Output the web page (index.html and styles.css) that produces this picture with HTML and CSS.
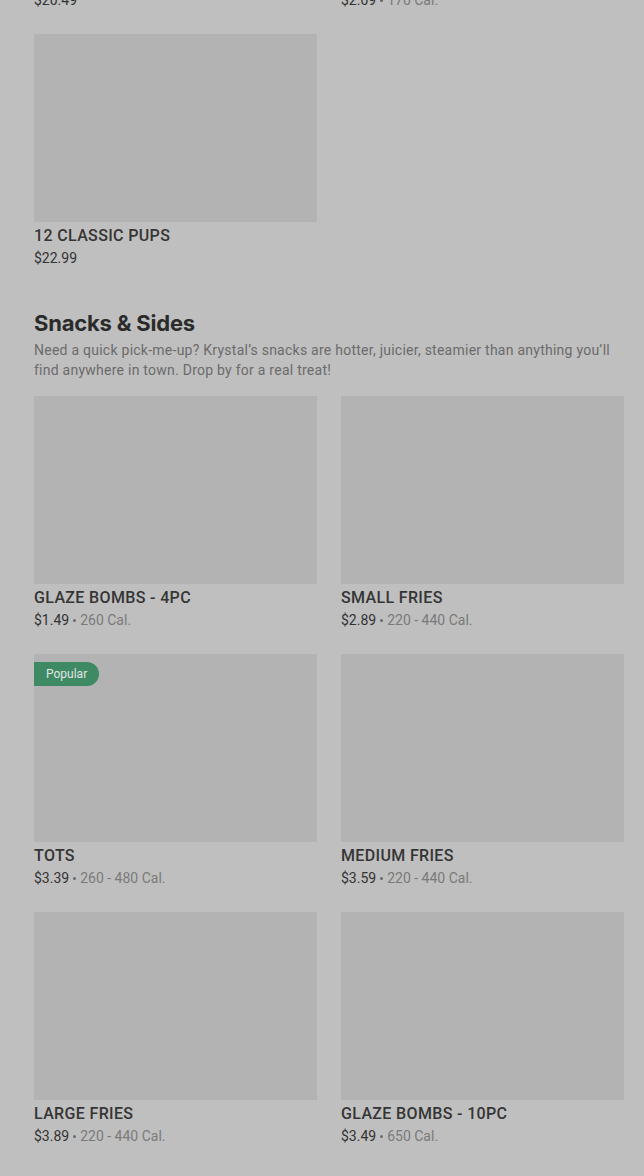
FILE: index.html
```html
<!DOCTYPE html>
<html lang="en">
<head>
<meta charset="utf-8">
<link rel="stylesheet" href="styles.css">
</head>
<body>
<main class="page">
  <section class="section section-top">
    <div class="grid">
      <div class="card card-partial">
        <div class="card-price"><span class="price">$20.49</span></div>
      </div>
      <div class="card card-partial">
        <div class="card-price"><span class="price">$2.09</span><span class="dot"></span><span class="cal">170 Cal.</span></div>
      </div>
      <div class="card">
        <div class="thumb"></div>
        <div class="card-name">12 CLASSIC PUPS</div>
        <div class="card-price"><span class="price">$22.99</span></div>
      </div>
    </div>
  </section>

  <section class="section">
    <h2 class="section-title">Snacks &amp; Sides</h2>
    <p class="section-desc">Need a quick pick-me-up? Krystal’s snacks are hotter, juicier, steamier than anything you’ll find anywhere in town. Drop by for a real treat!</p>
    <div class="grid">
      <div class="card">
        <div class="thumb"></div>
        <div class="card-name">GLAZE BOMBS - 4PC</div>
        <div class="card-price"><span class="price">$1.49</span><span class="dot"></span><span class="cal">260 Cal.</span></div>
      </div>
      <div class="card">
        <div class="thumb"></div>
        <div class="card-name">SMALL FRIES</div>
        <div class="card-price"><span class="price">$2.89</span><span class="dot"></span><span class="cal">220 - 440 Cal.</span></div>
      </div>
      <div class="card">
        <div class="thumb"><span class="badge">Popular</span></div>
        <div class="card-name">TOTS</div>
        <div class="card-price"><span class="price">$3.39</span><span class="dot"></span><span class="cal">260 - 480 Cal.</span></div>
      </div>
      <div class="card">
        <div class="thumb"></div>
        <div class="card-name">MEDIUM FRIES</div>
        <div class="card-price"><span class="price">$3.59</span><span class="dot"></span><span class="cal">220 - 440 Cal.</span></div>
      </div>
      <div class="card">
        <div class="thumb"></div>
        <div class="card-name">LARGE FRIES</div>
        <div class="card-price"><span class="price">$3.89</span><span class="dot"></span><span class="cal">220 - 440 Cal.</span></div>
      </div>
      <div class="card">
        <div class="thumb"></div>
        <div class="card-name">GLAZE BOMBS - 10PC</div>
        <div class="card-price"><span class="price">$3.49</span><span class="dot"></span><span class="cal">650 Cal.</span></div>
      </div>
    </div>
  </section>
</main>
</body>
</html>
```

FILE: styles.css
```css
html, body {
  margin: 0;
  padding: 0;
  background: #bfbfbf;
}
body {
  font-family: "Roboto", "Liberation Sans", sans-serif;
  color: #2f2f2f;
  overflow: hidden;
  height: 1176px;
}
.page {
  padding: 0 20px 0 34px;
  margin-top: -10px;
}
.grid {
  display: grid;
  grid-template-columns: 283px 283px;
  column-gap: 24px;
  row-gap: 24px;
}
.card {
  display: flex;
  flex-direction: column;
}
.thumb {
  position: relative;
  height: 188px;
  background: #b3b3b3;
}
.card-name {
  margin-top: 4px;
  font-size: 16px;
  line-height: 20px;
  font-weight: 500;
  color: #353535;
  letter-spacing: 0.35px;
}
.card-price {
  margin-top: 2px;
  font-size: 14px;
  line-height: 20px;
  color: #333333;
  display: flex;
  align-items: center;
}
.card-partial .card-price {
  margin-top: 0;
}
.dot {
  display: inline-block;
  width: 3px;
  height: 3px;
  border-radius: 50%;
  background: #6b6b6b;
  margin: 0 4px;
}
.cal {
  color: #7a7a7a;
}
.section-top {
  margin-bottom: 41px;
}
.section-title {
  margin: 0;
  font-family: "Inter", "Roboto", sans-serif;
  font-size: 22px;
  line-height: 28px;
  font-weight: 700;
  color: #2b2b2b;
  letter-spacing: -0.2px;
}
.section-desc {
  margin: 3px 0 16px;
  font-size: 14px;
  line-height: 20px;
  color: #6b6b6b;
  letter-spacing: 0.25px;
}
.badge {
  position: absolute;
  left: 0;
  top: 8px;
  height: 24px;
  padding: 0 12px;
  display: flex;
  align-items: center;
  background: #3e8a65;
  color: #e3e3e3;
  font-size: 12px;
  border-radius: 0 12px 12px 0;
}
```
